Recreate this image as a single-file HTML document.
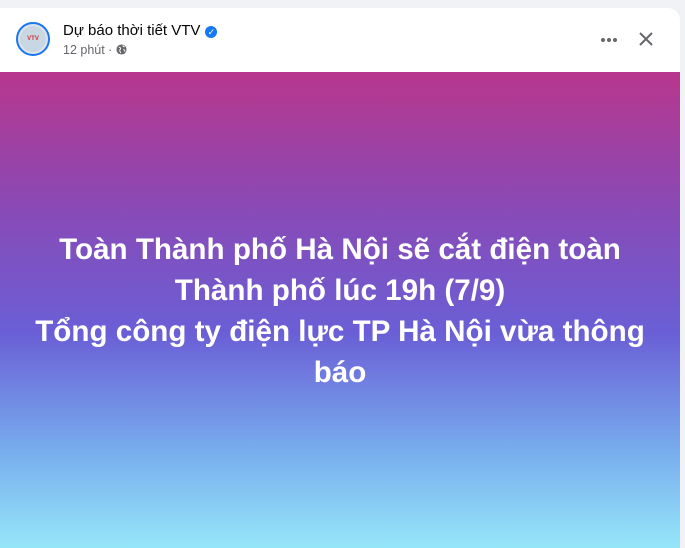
<!DOCTYPE html>
<html><head><meta charset="utf-8"><style>
body{margin:0;width:685px;height:544px;background:#f0f2f5;font-family:"Liberation Sans",sans-serif;overflow:hidden;position:relative}
.card{position:absolute;left:0;top:8px;width:680px;height:540px;background:#fff;border-radius:0 12px 0 0;overflow:hidden}
.av{position:absolute;left:16px;top:14px;width:34px;height:34px;border-radius:50%;border:2px solid #1877f2;box-sizing:border-box;background:#dfe3ea;padding:2px}
.av div{width:100%;height:100%;border-radius:50%;background:#c9d7e3;font-size:6px;font-weight:bold;color:#c33;text-align:center;line-height:26px}
.name{position:absolute;left:63px;top:14px;font-size:15px;color:#050505}
.tick{display:inline-block;width:12px;height:12px;border-radius:50%;background:#1877f2;vertical-align:0px;margin-left:5px;color:#fff;font-size:9px;text-align:center;line-height:12px}
.time{position:absolute;left:63px;top:35px;font-size:12.5px;color:#65676b}
.dots{position:absolute;left:601px;top:28px;line-height:4px}
.dots span{display:inline-block;width:4px;height:4px;border-radius:50%;background:#65676b;margin-right:2px}
.bg{position:absolute;left:0;top:64px;width:680px;height:476px;background:linear-gradient(#b8378d 0%,#8a49b5 28%,#6a5fd6 55%,#78aeee 80%,#96e6f9 100%)}
.txt{position:absolute;left:-20px;top:157px;width:720px;text-align:center;color:#fff;font-weight:bold;font-size:29.6px;line-height:41px}
</style></head><body>
<div class="card">
<div class="av"><div>VTV</div></div>
<div class="name">Dự báo thời tiết VTV<span class="tick">✓</span></div>
<div class="time">12 phút · <svg width="11" height="11" viewBox="0 0 12 12" style="vertical-align:-1px"><circle cx="6" cy="6" r="5.5" fill="#65676b"/><path d="M3 3.5c1 0 2 .5 2 1.5s-1 1-1 2 1 1.5 1 3M7.5 1.5c0 1 1 1.5 2 1.5M8 6c1 0 2 1 1.5 2.5" stroke="#fff" stroke-width="1" fill="none"/></svg></div>
<div class="dots"><span></span><span></span><span></span></div>
<svg style="position:absolute;left:638px;top:23px" width="16" height="16" viewBox="0 0 16 16"><path d="M2 2L14 14M14 2L2 14" stroke="#65676b" stroke-width="2"/></svg>
<div class="bg"><div class="txt">Toàn Thành phố Hà Nội sẽ cắt điện toàn<br>Thành phố lúc 19h (7/9)<br>Tổng công ty điện lực TP Hà Nội vừa thông<br>báo</div></div>
</div>
</body></html>
